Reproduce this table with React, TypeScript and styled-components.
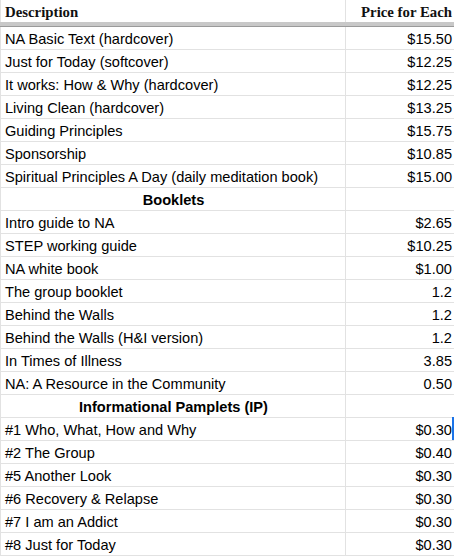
import * as React from 'react';
import styled, { createGlobalStyle } from 'styled-components';

const GlobalStyle = createGlobalStyle`
  html, body {
    margin: 0;
    padding: 0;
    background: #ffffff;
  }
`;

const Sheet = styled.div`
  position: relative;
  display: grid;
  grid-template-columns: 345px 109px;
  width: 454px;
  font-family: 'Liberation Sans', Arial, sans-serif;
  font-size: 14.6px;
  color: #000000;
  border-left: 1px solid #e2e2e2;
  box-sizing: border-box;
`;

const HeaderCell = styled.div<{ $right?: boolean }>`
  height: 22px;
  display: flex;
  align-items: flex-end;
  justify-content: ${({ $right }) => ($right ? 'flex-end' : 'flex-start')};
  padding: 0 ${({ $right }) => ($right ? '3px' : '0')} 1px ${({ $right }) => ($right ? '0' : '4px')};
  box-sizing: border-box;
  font-family: 'Liberation Serif', 'Times New Roman', serif;
  font-weight: bold;
  font-size: 14.8px;
  line-height: 17px;
  color: #111111;
  border-right: ${({ $right }) => ($right ? 'none' : '1px solid #e2e2e2')};
  white-space: nowrap;
`;

const FreezeBar = styled.div`
  grid-column: 1 / span 2;
  height: 5px;
  margin-left: -1px;
  background: linear-gradient(#c8c8c8 0, #c8c8c8 4px, #9a9a9a 4px, #9a9a9a 5px);
`;

const Cell = styled.div<{ $align?: 'left' | 'right' | 'center'; $bold?: boolean; $last?: boolean }>`
  height: 23px;
  display: flex;
  align-items: flex-end;
  justify-content: ${({ $align }) =>
    $align === 'right' ? 'flex-end' : $align === 'center' ? 'center' : 'flex-start'};
  padding: 0 3px 1px 4px;
  box-sizing: border-box;
  font-weight: ${({ $bold }) => ($bold ? 'bold' : 'normal')};
  border-bottom: 1px solid #e2e2e2;
  border-right: ${({ $last }) => ($last ? 'none' : '1px solid #e2e2e2')};
  white-space: nowrap;
  line-height: 17px;
`;

const Cursor = styled.div`
  position: absolute;
  right: 0;
  width: 2px;
  height: 23px;
  background: #1a73e8;
`;

type Row = { name: string; price?: string; section?: boolean };

const rows: Row[] = [
  { name: 'NA Basic Text (hardcover)', price: '$15.50' },
  { name: 'Just for Today (softcover)', price: '$12.25' },
  { name: 'It works: How & Why (hardcover)', price: '$12.25' },
  { name: 'Living Clean (hardcover)', price: '$13.25' },
  { name: 'Guiding Principles', price: '$15.75' },
  { name: 'Sponsorship', price: '$10.85' },
  { name: 'Spiritual Principles A Day (daily meditation book)', price: '$15.00' },
  { name: 'Booklets', section: true },
  { name: 'Intro guide to NA', price: '$2.65' },
  { name: 'STEP working guide', price: '$10.25' },
  { name: 'NA white book', price: '$1.00' },
  { name: 'The group booklet', price: '1.2' },
  { name: 'Behind the Walls', price: '1.2' },
  { name: 'Behind the Walls (H&I version)', price: '1.2' },
  { name: 'In Times of Illness', price: '3.85' },
  { name: 'NA: A Resource in the Community', price: '0.50' },
  { name: 'Informational Pamplets (IP)', section: true },
  { name: '#1 Who, What, How and Why', price: '$0.30' },
  { name: '#2 The Group', price: '$0.40' },
  { name: '#5 Another Look', price: '$0.30' },
  { name: '#6 Recovery & Relapse', price: '$0.30' },
  { name: '#7 I am an Addict', price: '$0.30' },
  { name: '#8 Just for Today', price: '$0.30' },
];

const selectedRow = 17;

const App = () => (
  <>
    <GlobalStyle />
    <Sheet>
      <HeaderCell>Description</HeaderCell>
      <HeaderCell $right>Price for Each</HeaderCell>
      <FreezeBar />
      {rows.map((row) => (
        <React.Fragment key={row.name}>
          <Cell $align={row.section ? 'center' : 'left'} $bold={row.section}>
            {row.name}
          </Cell>
          <Cell $align="right" $last>
            {row.price}
          </Cell>
        </React.Fragment>
      ))}
      <Cursor style={{ top: 27 + selectedRow * 23 - 1 }} />
    </Sheet>
  </>
);

export default App;
